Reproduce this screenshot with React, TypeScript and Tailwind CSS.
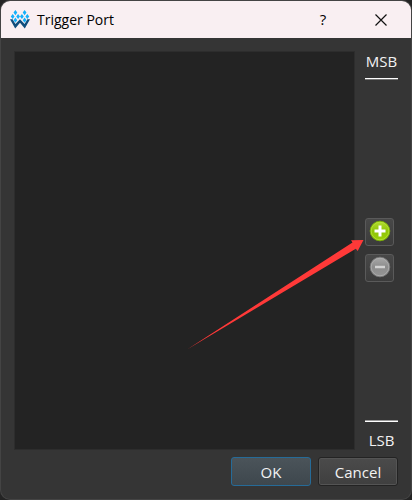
function Logo() {
  return (
    <svg width="20" height="20" viewBox="0 0 20 20" aria-hidden="true">
      <path d="M0 9.2h2.6L5.4 14 10 9.2l4.6 4.8L17.4 9.2H20L14.8 18.4 10 12.8 5.2 18.4Z" fill="#0f4d7c" />
      <g fill="#14b0fa">
        <path d="M5.4 0 7.3 2.6 5.4 5.2 3.5 2.6ZM14.6 0l1.9 2.6-1.9 2.6-1.9-2.6Z" />
        <path d="M2.7 3.9 4.6 6.5 2.7 9.1.8 6.5ZM8.1 3.9 10 6.5 8.1 9.1 6.2 6.5ZM11.9 3.9l1.9 2.6-1.9 2.6L10 6.5ZM17.3 3.9l1.9 2.6-1.9 2.6-1.9-2.6Z" />
        <path d="M5.4 7.6 7.3 10.2 5.4 12.8 3.5 10.2ZM14.6 7.6l1.9 2.6-1.9 2.6-1.9-2.6Z" />
      </g>
    </svg>
  );
}

function RoundIcon({ kind }: { kind: "add" | "remove" }) {
  const add = kind === "add";
  return (
    <svg width="22" height="22" viewBox="0 0 22 22" aria-hidden="true">
      <defs>
        <linearGradient id={kind} x1="0" y1="0" x2="0" y2="1">
          <stop offset="0" stopColor={add ? "#b4dc32" : "#aaaaaa"} />
          <stop offset="0.5" stopColor={add ? "#8fc408" : "#8c8c8c"} />
          <stop offset="1" stopColor={add ? "#9bd008" : "#959595"} />
        </linearGradient>
      </defs>
      <circle cx="11" cy="11" r="9.8" fill={`url(#${kind})`} stroke={add ? "#78aa09" : "#777777"} />
      <circle cx="11" cy="11" r="8.8" fill="none" stroke={add ? "#b5e13a" : "#b0b0b0"} strokeWidth="0.8" />
      <path d={add ? "M5.5 11h11M11 5.5v11" : "M6 11h10"} stroke={add ? "#ffffff" : "#d2d2d2"} strokeWidth={add ? 3 : 2.4} />
    </svg>
  );
}

const toolButton =
  "flex h-7 w-[29px] items-center justify-center rounded-[3px] border border-[#5a5a5a] bg-linear-to-b from-[#484848] to-[#3b3b3b] pb-0.5";
const dialogButton = "h-[29px] w-20 rounded-[3px] border text-[15px] leading-5 text-[#f2f2f2]";

export default function App() {
  return (
    <div className="flex min-h-screen bg-[#242424] p-px font-['Open_Sans','Noto_Sans',sans-serif]">
      <div
        role="dialog"
        aria-labelledby="title"
        className="flex flex-1 flex-col overflow-hidden rounded-[9px] bg-[#353535] shadow-[0_0_0_1px_#444444]"
      >
        <header className="flex h-[37px] items-center bg-[#f9eff2] pl-[9px] text-black">
          <Logo />
          <h1 id="title" className="ml-[7px] flex-1 text-[14px] leading-5">
            Trigger Port
          </h1>
          <button aria-label="Help" className="flex h-full w-14 items-center justify-center text-[15px]">
            ?
          </button>
          <button aria-label="Close" className="flex h-full w-[60px] items-center justify-center">
            <svg width="12" height="12" viewBox="0 0 12 12" stroke="#111" strokeWidth="1.2" aria-hidden="true">
              <path d="M.5.5l11 11M11.5.5l-11 11" />
            </svg>
          </button>
        </header>
        <main className="flex flex-1 flex-col px-[13px] py-[13px]">
          <div className="relative flex flex-1 gap-2.5">
            <div className="flex-1 border border-[#2d2d2d] bg-[#232323]" />
            <div className="flex w-[33px] flex-col">
              <div className="flex justify-center text-[15px] leading-5 text-[#f2f2f2]">MSB</div>
              <div className="mt-[7px] h-0.5 border-t border-white bg-[#777777]" />
              <div className="flex flex-1 flex-col justify-center gap-2">
                <button aria-label="Add port" className={toolButton}>
                  <RoundIcon kind="add" />
                </button>
                <button aria-label="Remove port" className={toolButton}>
                  <RoundIcon kind="remove" />
                </button>
              </div>
              <div className="mb-2 h-0.5 border-t border-[#999999] bg-white" />
              <div className="flex justify-center text-[15px] leading-5 text-[#f2f2f2]">LSB</div>
            </div>
            <svg
              className="pointer-events-none absolute right-[34px] bottom-[99px]"
              width="178"
              height="112"
              viewBox="186 238 178 112"
              aria-hidden="true"
            >
              <path d="M187 348.5 352.5 241.5 351 239.2 363.5 239 357.7 250 355.8 247.8Z" fill="#ff3938" />
            </svg>
          </div>
          <footer className="mt-[7px] flex justify-end gap-[7px]">
            <button className={`${dialogButton} border-[#266b98] bg-linear-to-b from-[#4b545a] to-[#3e474d]`}>OK</button>
            <button className={`${dialogButton} border-[#232323] bg-linear-to-b from-[#4b4b4b] to-[#3f3f3f] inset-ring inset-ring-[#545454]`}>
              Cancel
            </button>
          </footer>
        </main>
      </div>
    </div>
  );
}
